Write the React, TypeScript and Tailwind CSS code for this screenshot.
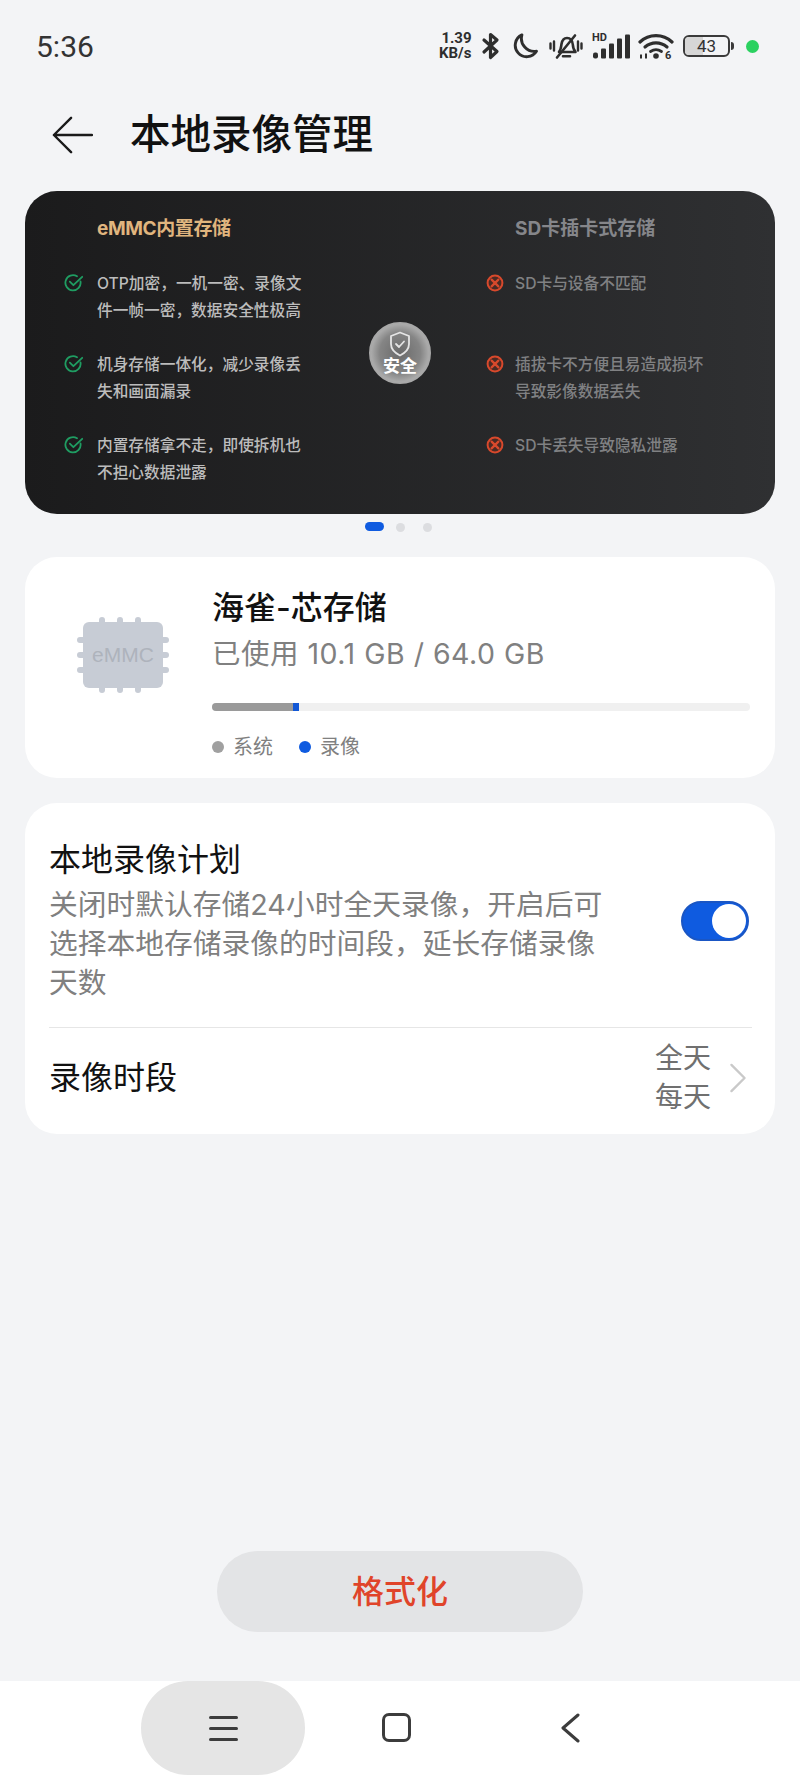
const cjk = "font-['Inter','Noto_Sans_CJK_SC',sans-serif]";

const goodItems = [
  ["OTP加密，一机一密、录像文", "件一帧一密，数据安全性极高"],
  ["机身存储一体化，减少录像丢", "失和画面漏录"],
  ["内置存储拿不走，即使拆机也", "不担心数据泄露"],
];

const badItems = [["SD卡与设备不匹配"], ["插拔卡不方便且易造成损坏", "导致影像数据丢失"], ["SD卡丢失导致隐私泄露"]];

function CheckIcon() {
  return (
    <svg width="20" height="20" viewBox="0 0 20 20" fill="none" className="shrink-0">
      <path d="M16.5 8.5A7.6 7.6 0 1 1 13 3.3" stroke="#1f9d62" strokeWidth="1.8" strokeLinecap="round" />
      <path d="M5.8 8.6l3.6 3.6 8.8-8.4" stroke="#1f9d62" strokeWidth="1.8" strokeLinecap="round" strokeLinejoin="round" />
    </svg>
  );
}

function CrossIcon() {
  return (
    <svg width="18" height="18" viewBox="0 0 18 18" fill="none" className="ml-[1px] shrink-0">
      <circle cx="9" cy="9" r="7.4" fill="#4a2a24" stroke="#d8492c" strokeWidth="2" />
      <path d="M5.600 5.600l6.800 6.800M12.400 5.600l-6.800 6.800" stroke="#d8492c" strokeWidth="2.200" strokeLinecap="round" />
    </svg>
  );
}

function StatusIcons() {
  return (
    <div className="flex items-center text-[#2e2e2e]">
      <div className="w-[35px] text-[15px] leading-[15px] font-bold font-['Roboto',sans-serif]">
        <div className="text-center">1.39</div>
        <div className="whitespace-nowrap">KB/s</div>
      </div>
      {/* bluetooth */}
      <svg width="20" height="28" viewBox="0 0 20 27" fill="none" className="ml-[7px]">
        <path d="M3 7.500l13 11.500-6.500 6V2l6.500 5.500L3 19.500" stroke="currentColor" strokeWidth="3.200" strokeLinejoin="round" strokeLinecap="round" />
      </svg>
      {/* moon */}
      <svg width="27" height="26" viewBox="0 0 26 25" fill="none" className="ml-[10px]">
        <path d="M10.500 1.800A11 11 0 1 0 24.500 17.500 12.500 12.500 0 0 1 10.500 1.800Z" stroke="currentColor" strokeWidth="2.800" strokeLinejoin="round" />
      </svg>
      {/* muted bell */}
      <svg width="34" height="27" viewBox="0 0 34 26" fill="none" className="ml-[11px]">
        <path d="M10 18.500c2-2 2-5 2.500-8C13.200 6.500 15 4.500 18 4.500c3.500 0 5.500 3 5.800 6.500.2 3 .8 5.500 2.700 7.500H10Z" stroke="currentColor" strokeWidth="2.600" strokeLinejoin="round" />
        <path d="M14 22.800h7M8 24L26 2" stroke="currentColor" strokeWidth="2.600" strokeLinecap="round" />
        <path d="M1.500 10v5M5 8v9M29 8v9M32.500 10v5" stroke="currentColor" strokeWidth="2.400" strokeLinecap="round" />
      </svg>
      {/* signal */}
      <div className="relative ml-[9px] h-[28px] w-[38px]">
        <svg width="38" height="28" viewBox="0 0 38 27" className="absolute inset-0">
          <rect x="1" y="20" width="5" height="6" rx="2" fill="currentColor" />
          <rect x="9" y="16" width="5" height="10" rx="1" fill="currentColor" />
          <rect x="17" y="11" width="5" height="15" rx="1" fill="currentColor" />
          <rect x="25" y="6" width="5" height="20" rx="1" fill="currentColor" />
          <rect x="33" y="2" width="5" height="24" rx="1" fill="currentColor" />
        </svg>
        <span className="absolute left-0 top-0 text-[11px] leading-[12px] font-bold font-['Roboto',sans-serif]">HD</span>
      </div>
      {/* wifi */}
      <svg width="36" height="28" viewBox="0 0 36 27" fill="none" className="ml-[8px]">
        <path d="M2 9.500c9-8.500 23-8.500 32 0" stroke="currentColor" strokeWidth="3.200" strokeLinecap="round" />
        <path d="M7 14.500c6.500-5.500 15.500-5.500 22 0" stroke="currentColor" strokeWidth="3.200" strokeLinecap="round" />
        <path d="M12.500 19c3.500-2.300 7.500-2.300 11 0" stroke="currentColor" strokeWidth="2.800" strokeLinecap="round" />
        <circle cx="18" cy="23.500" r="2.800" fill="currentColor" />
        <path d="M3 26v-4M8 26v-5" stroke="currentColor" strokeWidth="2" />
        <text x="27" y="26" fontSize="11" fontWeight="700" fontFamily="Roboto" fill="currentColor">6</text>
      </svg>
      {/* battery */}
      <div className="relative ml-[9px] flex h-[22px] w-[47px] items-center justify-center overflow-hidden rounded-[6px] border-2 border-[#3a3a3a]">
        <div className="absolute inset-y-0 left-0 w-[18px] bg-[#d6d6d6]" />
        <span className="relative text-[17px] leading-none font-['Roboto',sans-serif] text-[#333]">43</span>
      </div>
      <div className="ml-[1px] h-[8px] w-[3px] rounded-r-sm bg-[#3a3a3a]" />
      <div className="ml-[12px] size-[13px] rounded-full bg-[#2bd160]" />
    </div>
  );
}

function ChipIcon() {
  const pins = [0, 1, 2];
  return (
    <div className="relative h-[66px] w-[80px] rounded-[6px] bg-[#c7ccd5] flex items-center justify-center">
      <span className="text-[21px] text-[#aeb3bc] font-['Liberation_Sans',sans-serif]">eMMC</span>
      <div className="absolute -top-[5px] left-[16px] flex gap-[12px]">
        {pins.map((p) => <div key={p} className="h-[6px] w-[6px] rounded-t-full bg-[#c7ccd5]" />)}
      </div>
      <div className="absolute -bottom-[5px] left-[16px] flex gap-[12px]">
        {pins.map((p) => <div key={p} className="h-[6px] w-[6px] rounded-b-full bg-[#c7ccd5]" />)}
      </div>
      <div className="absolute -left-[6px] top-[15px] flex flex-col gap-[9px]">
        {pins.map((p) => <div key={p} className="h-[6px] w-[7px] rounded-l-full bg-[#c7ccd5]" />)}
      </div>
      <div className="absolute -right-[6px] top-[15px] flex flex-col gap-[9px]">
        {pins.map((p) => <div key={p} className="h-[6px] w-[7px] rounded-r-full bg-[#c7ccd5]" />)}
      </div>
    </div>
  );
}

function CompareRow({ lines, bad }: { lines: string[]; bad?: boolean }) {
  return (
    <div className={`h-[81px] flex items-start ${bad ? "gap-[11px]" : "gap-[13px]"}`}>
      <div className={bad ? "mt-[4px]" : "mt-[3px]"}>{bad ? <CrossIcon /> : <CheckIcon />}</div>
      <div className={`text-[15.700px] leading-[27px] font-medium whitespace-nowrap ${bad ? "text-[#808183]" : "text-[#bcbcbc]"}`}>
        {lines.map((l) => <div key={l}>{l}</div>)}
      </div>
    </div>
  );
}

export default function App() {
  return (
    <div className={`h-[1778px] w-[800px] overflow-hidden bg-[#f3f4f6] flex flex-col ${cjk}`}>
      {/* status bar */}
      <div className="h-[92px] shrink-0 flex items-center justify-between pl-[36px] pr-[41px]">
        <span className="text-[30px] text-[#333] font-['Roboto',sans-serif]">5:36</span>
        <StatusIcons />
      </div>

      {/* header */}
      <div className="h-[86px] shrink-0 flex items-center pl-[52px] gap-[37px]">
        <svg width="41" height="40" viewBox="0 0 43 40" fill="none">
          <path d="M20 2L2 20l18 18M2 20h40" stroke="#1a1a1a" strokeWidth="2.500" strokeLinecap="round" strokeLinejoin="round" />
        </svg>
        <h1 className="text-[40.500px] leading-none font-medium text-[#111]">本地录像管理</h1>
      </div>

      <main className="mt-[13px] flex-1 px-[25px] flex flex-col">
        {/* compare banner */}
        <section className="relative h-[323px] shrink-0 rounded-[32px] bg-gradient-to-r from-[#1b1b1c] to-[#2f3032] flex pt-[23px]">
          <div className="w-[460px] pl-[39px]">
            <div className="pl-[33px] h-[30px] leading-[30px] text-[19px] tracking-[-0.4px] font-bold text-[#e0b57e]">eMMC内置存储</div>
            <div className="mt-[26px]">
              {goodItems.map((g) => <CompareRow key={g[0]} lines={g} />)}
            </div>
          </div>
          <div>
            <div className="pl-[30px] h-[30px] leading-[30px] text-[19px] font-bold text-[#85868a]">SD卡插卡式存储</div>
            <div className="mt-[26px]">
              {badItems.map((b) => <CompareRow key={b[0]} lines={b} bad />)}
            </div>
          </div>
          <div className="absolute left-[344px] top-[131px] size-[62px] rounded-full border-2 border-[#a8a8a8] bg-[radial-gradient(circle_at_50%_50%,#6a6a6a_0%,#858585_50%,#e2e2e2_100%)] flex flex-col items-center pt-[7px]">
            <svg width="22" height="26" viewBox="0 0 22 26" fill="none">
              <path d="M11 1.500l9 3.500v8c0 5.500-4 9-9 11.500C6 22 2 18.500 2 13V5l9-3.500Z" stroke="#e4e4e4" strokeWidth="1.800" strokeLinejoin="round" />
              <path d="M7 13l3 3 5-5.500" stroke="#e4e4e4" strokeWidth="1.800" strokeLinecap="round" strokeLinejoin="round" />
            </svg>
            <span className="text-[17px] leading-[19px] font-bold text-white">安全</span>
          </div>
        </section>

        {/* pager dots */}
        <div className="h-[43px] shrink-0 flex items-start justify-center gap-[12px] pt-[8px] pr-[4px]">
          <div className="h-[9px] w-[19px] rounded-full bg-[#0f5be0]" />
          <div className="mt-[0.500px] size-[9px] rounded-full bg-[#dcdde0]" />
          <div className="ml-[6px] mt-[0.500px] size-[9px] rounded-full bg-[#dcdde0]" />
        </div>

        {/* storage card */}
        <section className="h-[221px] shrink-0 rounded-[32px] bg-white flex pl-[58px] pr-[25px]">
          <div className="pt-[65px]"><ChipIcon /></div>
          <div className="flex-1 ml-[49px] pt-[29px]">
            <div className="text-[32px] leading-[44px] font-medium text-[#111]">海雀-芯存储</div>
            <div className="mt-[2px] text-[28.500px] leading-[44px] text-[#808080] tracking-[0.5px]">已使用 10.1 GB / 64.0 GB</div>
            <div className="mt-[27px] h-[8px] w-full rounded-full bg-[#f0f0f0] flex overflow-hidden">
              <div className="h-full w-[81px] bg-[#9a9a9a]" />
              <div className="h-full w-[6px] bg-[#1258d6]" />
            </div>
            <div className="mt-[22px] flex items-center text-[20px] leading-[28px] text-[#808080]">
              <span className="size-[12px] rounded-full bg-[#a0a0a0]" />
              <span className="ml-[9px]">系统</span>
              <span className="ml-[26px] size-[12px] rounded-full bg-[#0f5be0]" />
              <span className="ml-[9px]">录像</span>
            </div>
          </div>
        </section>

        {/* plan card */}
        <section className="mt-[25px] h-[331px] shrink-0 rounded-[32px] bg-white pl-[24px] pr-[23px] flex flex-col">
          <div className="h-[225px] shrink-0 border-b border-[#e6e6e6] flex items-center justify-between pt-[11px]">
            <div className="w-[558px] pt-[24px] self-start">
              <div className="text-[32px] leading-[44px] text-[#111]">本地录像计划</div>
              <div className="mt-[3px] text-[28.750px] leading-[39px] text-[#808080]">关闭时默认存储24小时全天录像，开启后可选择本地存储录像的时间段，延长存储录像天数</div>
            </div>
            <div className="mr-[3px] relative h-[40px] w-[68px] rounded-full bg-[#0f5be0] border-2 border-[#1a56c4]">
              <div className="absolute right-[1px] top-[1px] size-[34px] rounded-full bg-white" />
            </div>
          </div>
          <div className="flex-1 flex items-center justify-between pb-[7px]">
            <span className="text-[32px] text-[#111]">录像时段</span>
            <div className="flex items-center">
              <div className="text-[28px] leading-[39px] text-[#707070]">
                <div>全天</div>
                <div>每天</div>
              </div>
              <svg width="18" height="30" viewBox="0 0 18 32" fill="none" className="ml-[18px] mr-[5px]">
                <path d="M2 2l14 14L2 30" stroke="#c9c9c9" strokeWidth="2.500" strokeLinecap="round" strokeLinejoin="round" />
              </svg>
            </div>
          </div>
        </section>

        {/* format button */}
        <div className="flex-1 flex items-end justify-center pb-[49px]">
          <button className="h-[81px] w-[366px] rounded-full bg-[#e3e4e6] text-[32px] font-medium text-[#e0442a]">格式化</button>
        </div>
      </main>

      {/* nav bar */}
      <nav className="h-[97px] shrink-0 bg-white relative flex items-start">
        <div className="ml-[141px] h-[94px] w-[164px] rounded-[47px] bg-[#e5e5e5] flex flex-col items-center justify-center gap-[8px]">
          <div className="h-[3px] w-[29px] rounded-full bg-[#3c3c3c]" />
          <div className="h-[3px] w-[29px] rounded-full bg-[#3c3c3c]" />
          <div className="h-[3px] w-[29px] rounded-full bg-[#3c3c3c]" />
        </div>
        <div className="ml-[77px] mt-[32px] h-[29px] w-[29px] rounded-[7px] border-[3px] border-[#3c3c3c]" />
        <svg width="20" height="30" viewBox="0 0 20 30" fill="none" className="ml-[149px] mt-[32px]">
          <path d="M18 2L3 15l15 13" stroke="#3c3c3c" strokeWidth="3" strokeLinecap="round" strokeLinejoin="round" />
        </svg>
      </nav>
    </div>
  );
}
